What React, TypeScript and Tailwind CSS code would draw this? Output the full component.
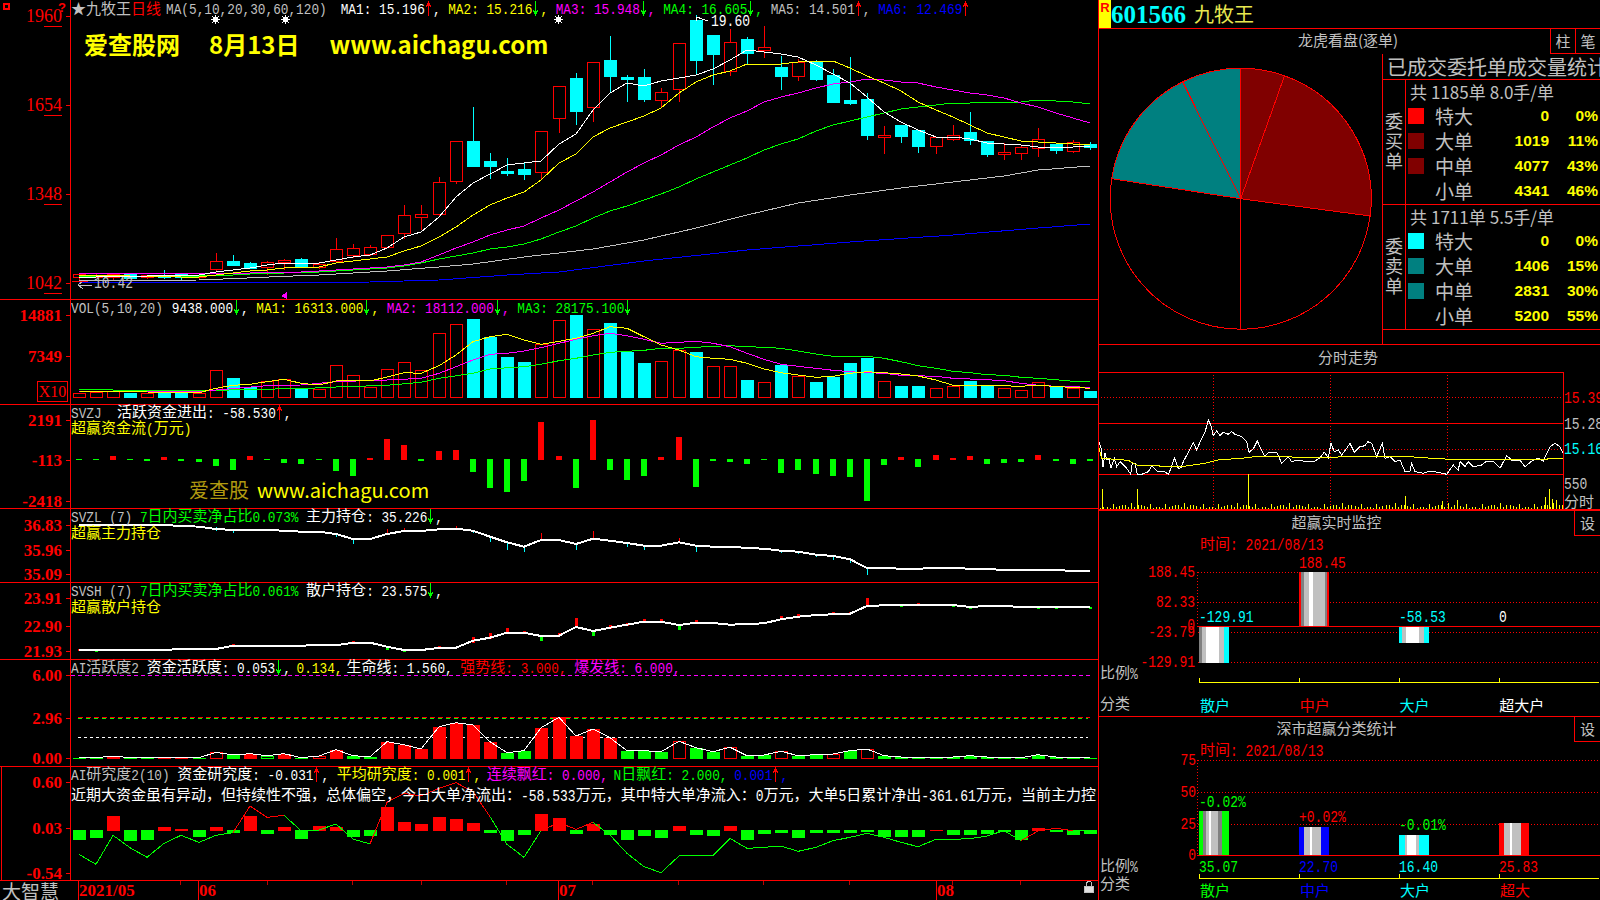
import type { ReactNode } from 'react';

const RED = '#ff0000';
const CYAN = '#00ffff';
const GREEN = '#00ff00';
const X = (i: number) => Math.round(78.6 + 17.14 * i);
const rx = (z: number) => 1095 + z / 3;

const cjkFont = "font-['Noto_Sans_CJK_SC',sans-serif]";
const monoFont = "font-['Liberation_Mono',monospace]";
const serifFont = "font-['Liberation_Serif',serif]";

// [high, body top, body bottom, low, up]
const candles: number[][] = [
  [273, 274, 277, 281, 1], [274, 275, 277, 278, 1], [273, 274, 277, 280, 1], [274, 274, 278, 279, 0],
  [275, 275, 277, 279, 1], [270, 275, 277, 279, 0], [274, 274, 277, 280, 0], [275, 275, 277, 280, 1],
  [253, 261, 269, 272, 1], [255, 261, 265, 265, 0], [262, 263, 268, 269, 0], [261, 262, 267, 275, 1],
  [259, 260, 262, 270, 1], [258, 259, 267, 268, 0], [263, 264, 267, 269, 1], [238, 249, 261, 263, 1],
  [244, 248, 255, 258, 1], [245, 247, 254, 256, 1], [235, 235, 247, 248, 1], [205, 215, 233, 239, 1],
  [205, 214, 217, 230, 1], [177, 182, 214, 217, 1], [141, 141, 181, 184, 1], [107, 141, 166, 167, 0],
  [153, 161, 166, 179, 0], [158, 171, 173, 176, 0], [163, 169, 174, 180, 0], [131, 131, 172, 180, 1],
  [86, 86, 118, 133, 1], [73, 78, 111, 125, 0], [62, 62, 107, 122, 1], [36, 60, 76, 92, 0],
  [75, 77, 79, 102, 0], [69, 77, 99, 102, 0], [88, 92, 100, 108, 1], [43, 43, 89, 102, 1],
  [15, 20, 60, 74, 0], [35, 35, 54, 85, 0], [29, 42, 71, 76, 1], [37, 39, 53, 64, 0],
  [26, 47, 50, 58, 1], [56, 67, 76, 90, 0], [59, 62, 76, 81, 1], [60, 62, 79, 81, 0],
  [69, 75, 102, 103, 0], [57, 100, 103, 105, 0], [93, 99, 135, 140, 0], [126, 135, 137, 154, 1],
  [125, 125, 136, 143, 0], [130, 130, 146, 153, 0], [137, 137, 146, 154, 1], [125, 135, 139, 141, 1],
  [112, 132, 140, 145, 0], [141, 141, 154, 157, 0], [143, 152, 154, 160, 1], [145, 147, 153, 160, 1],
  [128, 139, 148, 157, 1], [143, 144, 150, 154, 0], [140, 142, 151, 153, 1], [142, 144, 147, 150, 0],
];

const interp = (pts: number[][]) => {
  const out: number[] = [];
  for (let i = 0; i < 60; i++) {
    const k = pts.findIndex((p) => p[0] >= i);
    if (k <= 0) out.push(pts[0][1]);
    else {
      const [a, b] = [pts[k - 1], pts[k]];
      out.push(a[1] + ((b[1] - a[1]) * (i - a[0])) / (b[0] - a[0]));
    }
  }
  return out;
};

const ma1 = [277, 277, 276, 276, 276, 275, 275, 275, 272, 270, 268, 265, 263, 263, 263, 260, 257, 255, 248, 237, 232, 217, 197, 183, 174, 165, 163, 161, 144, 134, 110, 93, 83, 86, 81, 78, 75, 69, 60, 50, 52, 54, 57, 65, 74, 83, 97, 112, 122, 130, 137, 137, 139, 143, 144, 145, 147, 148, 147, 146];
const ma2 = [275, 275, 275, 276, 276, 276, 277, 277, 275, 273, 271, 270, 268, 267, 267, 263, 261, 259, 257, 251, 246, 237, 227, 215, 205, 198, 192, 180, 163, 154, 137, 128, 122, 116, 108, 93, 82, 75, 71, 64, 64, 64, 62, 61, 61, 68, 76, 83, 91, 102, 110, 117, 125, 133, 137, 141, 142, 143, 144, 145];
const ma3 = [273, 273, 273, 273, 273, 273, 273, 273, 273, 273, 273, 272, 272, 272, 271, 270, 269, 268, 267, 265, 262, 255, 248, 242, 235, 230, 226, 218, 210, 201, 192, 182, 172, 163, 155, 145, 137, 127, 118, 111, 102, 97, 93, 88, 84, 82, 79, 80, 82, 83, 87, 90, 93, 95, 98, 103, 107, 113, 118, 123];
const ma4 = [276, 276, 276, 276, 276, 276, 276, 276, 275, 275, 274, 273, 273, 272, 272, 271, 270, 269, 268, 266, 263, 259, 256, 253, 249, 247, 244, 239, 232, 226, 218, 211, 206, 200, 194, 187, 179, 172, 165, 158, 150, 144, 139, 131, 125, 121, 117, 113, 109, 107, 105, 103, 103, 102, 102, 102, 100, 101, 102, 104];
const ma5 = interp([[0, 281], [7, 280], [14, 275], [18, 271], [21, 267], [23, 264], [26, 257], [30, 249], [33, 240], [36, 228], [39, 215], [42, 203], [45, 195], [48, 188], [51, 182], [54, 176], [56, 170], [59, 166]]);
const ma6 = interp([[0, 282], [15, 283], [21, 280], [25, 275], [28, 272], [33, 261], [39, 250], [45, 242], [51, 235], [56, 228], [59, 224]]);

const volTops = [295, 290, 287, 293, 293, 293, 293, 293, 226, 249, 276, 257, 253, 280, 283, 211, 241, 275, 223, 202, 226, 115, 88, 72, 126, 186, 201, 148, 75, 60, 103, 84, 171, 204, 199, 166, 171, 214, 214, 255, 262, 210, 244, 261, 246, 204, 189, 258, 273, 273, 280, 274, 258, 273, 280, 286, 262, 276, 280, 288];
const volYellow = interp([[0, 288], [7, 293], [8, 280], [9, 271], [10, 268], [11, 260], [12, 253], [13, 265], [14, 270], [15, 258], [16, 257], [17, 258], [18, 246], [19, 233], [20, 235], [21, 212], [22, 180], [23, 140], [24, 125], [25, 118], [26, 135], [27, 148], [29, 130], [30, 115], [31, 95], [32, 100], [33, 125], [34, 150], [35, 165], [36, 185], [37, 190], [38, 193], [39, 205], [40, 222], [41, 233], [42, 240], [43, 247], [44, 244], [45, 235], [46, 230], [47, 233], [48, 237], [49, 243], [50, 255], [51, 271], [53, 271], [55, 274], [56, 270], [57, 275], [58, 277], [59, 280]]);
const volMagenta = interp([[0, 290], [7, 290], [8, 285], [11, 272], [13, 270], [15, 260], [18, 255], [20, 250], [21, 235], [22, 215], [23, 195], [24, 178], [25, 175], [26, 168], [27, 158], [28, 145], [29, 133], [30, 122], [31, 115], [32, 122], [33, 133], [34, 145], [35, 142], [36, 139], [37, 145], [38, 155], [39, 175], [40, 193], [41, 208], [42, 214], [43, 220], [44, 226], [45, 230], [46, 233], [47, 235], [48, 241], [50, 244], [51, 250], [53, 254], [54, 257], [55, 265], [56, 271], [57, 274], [59, 277]]);
const volGreen = interp([[0, 284], [7, 288], [10, 283], [13, 281], [15, 276], [18, 271], [20, 262], [21, 250], [23, 235], [24, 222], [26, 215], [27, 208], [28, 197], [29, 190], [30, 180], [31, 172], [32, 169], [33, 166], [34, 160], [35, 160], [36, 157], [37, 154], [38, 152], [39, 155], [40, 157], [41, 160], [42, 168], [43, 177], [44, 184], [46, 184], [47, 190], [48, 200], [49, 212], [50, 220], [51, 229], [52, 233], [53, 239], [54, 241], [55, 247], [56, 250], [57, 254], [58, 259], [59, 259]]);

const flows = [-3, -3, 12, -3, -6, 9, -7, -9, -22, -33, 12, -3, -12, -16, -3, -36, -52, 6, 63, 45, -6, 27, 30, -40, -88, -100, -67, 114, 12, -88, 120, -34, -64, -52, 9, 69, -85, -7, -10, -16, -3, -43, -34, -46, -52, -55, -127, -19, 9, -25, 15, 6, 12, -16, -13, -10, 15, -7, -16, -7];

const zlLine = [44, 44, 44, 45, 45, 46, 47, 50, 57, 60, 60, 60, 62, 65, 65, 72, 87, 87, 72, 63, 63, 58, 56, 62, 80, 97, 110, 90, 90, 102, 86, 92, 99, 107, 107, 97, 107, 110, 110, 114, 116, 122, 125, 134, 138, 148, 174, 174, 176, 176, 174, 174, 176, 177, 180, 180, 179, 180, 183, 183];
const zlTicks: [number, number, number, string][] = [[8, 50, 62, CYAN], [9, 60, 70, CYAN], [15, 72, 82, CYAN], [16, 87, 102, CYAN], [18, 57, 75, RED], [19, 55, 67, RED], [22, 47, 58, RED], [23, 60, 68, CYAN], [24, 80, 96, CYAN], [25, 97, 120, CYAN], [26, 110, 125, CYAN], [27, 70, 92, RED], [29, 102, 120, CYAN], [30, 63, 88, RED], [32, 99, 110, CYAN], [33, 107, 120, CYAN], [35, 84, 98, RED], [36, 107, 125, CYAN], [39, 114, 118, CYAN], [41, 122, 128, CYAN], [42, 125, 132, CYAN], [43, 134, 140, CYAN], [44, 138, 150, CYAN], [45, 148, 160, CYAN], [46, 174, 194, CYAN]];

const shLine = [420, 420, 420, 420, 420, 419, 418, 416, 417, 407, 408, 408, 408, 407, 405, 406, 398, 398, 410, 420, 420, 414, 413, 392, 383, 368, 368, 378, 377, 351, 363, 353, 344, 335, 335, 345, 338, 339, 344, 342, 340, 328, 320, 315, 313, 311, 288, 286, 285, 285, 285, 285, 291, 288, 288, 291, 291, 291, 291, 291];
const shTicks: [number, number, number, string][] = [[0, 418, 422, RED], [1, 420, 425, GREEN], [2, 418, 422, RED], [3, 416, 422, RED], [5, 416, 422, RED], [7, 413, 419, RED], [9, 402, 411, RED], [10, 406, 411, RED], [16, 394, 402, RED], [18, 408, 420, GREEN], [19, 418, 425, GREEN], [21, 408, 416, RED], [23, 381, 400, RED], [24, 370, 388, RED], [25, 354, 372, RED], [26, 364, 370, RED], [27, 378, 393, GREEN], [28, 370, 378, RED], [29, 324, 350, RED], [30, 364, 378, GREEN], [31, 345, 358, RED], [32, 340, 348, RED], [33, 327, 340, RED], [34, 328, 336, RED], [35, 346, 360, GREEN], [36, 330, 340, RED], [41, 318, 331, RED], [42, 312, 324, RED], [43, 312, 318, RED], [44, 306, 316, RED], [45, 306, 312, RED], [46, 264, 290, RED], [47, 282, 288, RED], [48, 286, 291, GREEN], [49, 280, 285, RED], [51, 285, 291, GREEN], [52, 291, 297, GREEN], [53, 286, 291, RED], [54, 286, 291, RED], [56, 291, 297, GREEN], [57, 291, 297, GREEN], [59, 291, 297, GREEN]];

const hotTops = [743, 743, 738, 743, 743, 741, 744, 743, 727, 735, 731, 737, 731, 743, 738, 719, 737, 740, 695, 704, 717, 650, 638, 645, 695, 728, 722, 653, 622, 678, 657, 683, 722, 722, 725, 694, 713, 725, 712, 737, 735, 724, 737, 734, 732, 722, 717, 737, 741, 741, 741, 741, 737, 741, 741, 743, 734, 741, 743, 743];
const hotKinds = 'ggrggrrghg' + 'rkrghrggrr' + 'rrrrrggrrr' + 'rrggghgghg' + 'ghgghghggg' + 'gggggggggg';

const aiBars = [240, 234, 168, 243, 240, 201, 207, 231, 201, 219, 168, 222, 201, 237, 198, 201, 231, 228, 141, 186, 192, 171, 177, 189, 219, 243, 225, 162, 174, 222, 192, 225, 240, 228, 234, 198, 225, 228, 198, 240, 222, 219, 234, 219, 219, 219, 216, 231, 231, 231, 211, 225, 225, 222, 216, 240, 204, 216, 225, 222];
const aiLine = [283, 313, 226, 263, 292, 250, 226, 247, 226, 218, 138, 172, 166, 212, 210, 192, 237, 252, 127, 100, 108, 85, 68, 95, 170, 253, 292, 212, 188, 208, 187, 225, 280, 320, 338, 288, 286, 286, 235, 265, 262, 258, 274, 262, 242, 232, 220, 232, 247, 260, 238, 238, 236, 228, 212, 242, 213, 205, 212, 212];

const minuteWhite = [12, 292, 18, 310, 24, 365, 30, 325, 36, 345, 42, 342, 48, 370, 58, 340, 65, 365, 75, 350, 85, 360, 95, 370, 107, 388, 112, 355, 120, 355, 127, 388, 140, 388, 160, 380, 170, 362, 185, 378, 200, 380, 207, 378, 220, 388, 228, 370, 238, 338, 250, 370, 258, 368, 265, 350, 280, 322, 295, 292, 305, 315, 320, 280, 330, 262, 340, 225, 347, 240, 355, 272, 365, 258, 375, 272, 385, 262, 400, 268, 410, 260, 420, 268, 440, 275, 455, 290, 462, 322, 475, 312, 487, 288, 497, 310, 510, 335, 520, 322, 545, 322, 560, 355, 580, 335, 590, 350, 610, 345, 635, 350, 660, 348, 675, 338, 688, 322, 700, 338, 708, 295, 718, 320, 730, 315, 740, 330, 755, 310, 765, 295, 778, 322, 795, 305, 810, 302, 818, 290, 830, 295, 845, 335, 862, 295, 870, 340, 885, 335, 900, 350, 915, 345, 930, 380, 945, 378, 950, 355, 960, 380, 985, 385, 1005, 378, 1030, 382, 1055, 388, 1075, 360, 1090, 375, 1095, 350, 1110, 365, 1120, 350, 1135, 365, 1160, 360, 1175, 348, 1195, 348, 1215, 370, 1235, 332, 1250, 345, 1275, 345, 1290, 365, 1310, 348, 1330, 340, 1345, 348, 1365, 305, 1380, 295, 1395, 305, 1405, 325];
const minuteYellow = [12, 310, 20, 340, 100, 346, 125, 360, 190, 360, 195, 365, 260, 365, 330, 355, 370, 345, 460, 338, 480, 334, 700, 338, 760, 334, 930, 334, 1010, 340, 1090, 344, 1350, 344, 1365, 340, 1405, 340];
const minuteSpikes: number[][] = [[22, 60], [127, 60], [460, 105], [930, 40], [1042, 25], [1085, 28], [1350, 35], [1362, 60], [1372, 30], [1382, 28]];

const poly = (ys: number[], fy: (v: number) => number = (v) => v) => ys.map((v, i) => `${X(i)},${fy(v).toFixed(1)}`).join(' ');
const zPoly = (arr: number[], oy: number) => {
  const out: string[] = [];
  for (let k = 0; k < arr.length; k += 2) out.push(`${rx(arr[k]).toFixed(1)},${(oy + arr[k + 1] / 3).toFixed(1)}`);
  return out.join(' ');
};

// CJK runs are 15px wide, latin runs half of that, stretched to the tall look of the bitmap font
const Mix = ({ t, c = '', wide }: { t: string; c?: string; wide?: boolean }) => (
  <span className={`whitespace-pre ${c}`}>
    {t.split(/([\u2605\u2e80-\u9fff\uff00-\uffef]+)/).map((run, i) =>
      i % 2 ? (
        <span key={i} className={`inline-block text-[15px] leading-[14px] ${cjkFont}`}>{run}</span>
      ) : run ? (
        <span key={i} className={`inline-block scale-y-[1.2] leading-[14px] ${monoFont} ${wide ? 'text-[13px]' : 'text-[12.75px]'}`}>{run}</span>
      ) : null,
    )}
  </span>
);

const Arrow = ({ up }: { up?: boolean }) => (
  <svg width="8" height="15" viewBox="0 0 8 15" shapeRendering="crispEdges" className="inline-block align-middle">
    {up ? (
      <path d="M3.5 0V15M2.5 2V5M4.5 2V5M1.5 4V6M5.5 4V6" stroke={RED} fill="none" />
    ) : (
      <path d="M3.5 0V15M2.5 10V13M4.5 10V13M1.5 9V11M5.5 9V11" stroke={GREEN} fill="none" />
    )}
  </svg>
);
const Up = () => <Arrow up />;
const Dn = () => <Arrow />;

const Legend = ({ children }: { children: ReactNode }) => (
  <div className="flex h-[14px] items-center whitespace-nowrap leading-[14px]">{children}</div>
);

const Axis = ({ top, labels, big, boxed, children }: { top: number; labels: [string, number][]; big?: boolean; boxed?: boolean; children?: ReactNode }) => (
  <div className={`relative shrink-0 border-r border-[#ff0000] ${boxed ? 'ml-[1px] w-[70px] border-l' : 'w-[71px]'}`}>
    {labels.map(([t, y]) => (
      <span key={t}>
        <span style={{ top: y - top }} className={`absolute right-[8px] -translate-y-1/2 whitespace-nowrap leading-none text-[#ff0000] ${serifFont} ${big ? 'text-[18px]' : 'text-[17px] font-bold'}`}>
          {big ? (
            <>
              {t.slice(0, 2)}
              <span className="border-b border-[#ff0000]">{t.slice(2)}</span>
            </>
          ) : (
            t
          )}
        </span>
        <span style={{ top: y - top }} className="absolute right-0 h-px w-[4px] bg-[#ff0000]" />
      </span>
    ))}
    {children}
  </div>
);

const Lab = ({ x, y, oy, t, c, right }: { x: number; y: number; oy: number; t: string; c: string; right?: boolean }) => (
  <div style={{ left: x - 1099, top: y - oy }} className={`absolute flex leading-[14px] ${right ? '-translate-x-full -translate-y-1/2' : '-translate-y-1/2'}`}>
    <Mix wide t={t} c={c} />
  </div>
);

const Stripes = ({ segs, y0, y1 }: { segs: [number, number, string][]; y0: number; y1: number }) => (
  <>
    {segs.map(([a, b, col]) => (
      <rect key={a} x={Math.round(rx(a))} y={y0} width={Math.round(rx(b)) - Math.round(rx(a))} height={y1 - y0} fill={col} />
    ))}
  </>
);

const Star = ({ x, y }: { x: number; y: number }) => (
  <g stroke="#fff" strokeWidth="1">
    <rect x={x - 2} y={y - 2} width="5" height="5" fill="#fff" stroke="none" />
    <path d={`M${x - 3} ${y - 3}L${x + 4} ${y + 4}M${x + 4} ${y - 3}L${x - 3} ${y + 4}M${x + 0.5} ${y - 4}V${y + 5}M${x - 4} ${y + 0.5}H${x + 5}`} />
  </g>
);

const PriceChart = () => (
  <svg width="1027" height="299" viewBox="71 0 1027 299" shapeRendering="crispEdges" className="block">
    {candles.map(([hi, top, bot, lo, up], i) => {
      const cx = X(i);
      const col = up ? RED : CYAN;
      return (
        <g key={i}>
          <path d={`M${cx + 0.5} ${hi}V${top}M${cx + 0.5} ${bot}V${lo}`} stroke={col} />
          {up ? (
            <rect x={cx - 5.5} y={top + 0.5} width="12" height={bot - top} fill="#000" stroke={RED} />
          ) : (
            <rect x={cx - 6} y={top} width="13" height={bot - top + 1} fill={CYAN} />
          )}
        </g>
      );
    })}
    <polyline points={poly(ma6)} fill="none" stroke="#0000ff" />
    <polyline points={poly(ma5)} fill="none" stroke="#c0c0c0" />
    <polyline points={poly(ma4)} fill="none" stroke={GREEN} />
    <polyline points={poly(ma3)} fill="none" stroke="#ff00ff" />
    <polyline points={poly(ma2)} fill="none" stroke="#ffff00" />
    <polyline points={poly(ma1)} fill="none" stroke="#ffffff" />
    <Star x={215} y={19} />
    <Star x={285} y={19} />
    <Star x={558} y={19} />
    <path d="M696 17L708 21M696 17l4 0M696 17l1 4" stroke="#fff" fill="none" />
    <path d="M78 285l5-4M78 285l5 4M78 285h14" stroke="#c0c0c0" fill="none" />
    <path d="M72 281h16" stroke={RED} />
    <path d="M281 296l6-4v7z" fill="#ff00ff" />
  </svg>
);

const VolChart = () => (
  <svg width="1027" height="104" viewBox="71 300 1027 104" shapeRendering="crispEdges" className="block">
    {volTops.map((z, i) => {
      const y = Math.round(295 + z / 3);
      const up = candles[i][4] || i === 37;
      return up ? (
        <rect key={i} x={X(i) - 5.5} y={y + 0.5} width="12" height={397 - y} fill="#000" stroke={RED} />
      ) : (
        <rect key={i} x={X(i) - 6} y={y} width="13" height={398 - y} fill={CYAN} />
      );
    })}
    <polyline points={poly(volGreen, (v) => 295 + v / 3)} fill="none" stroke={GREEN} />
    <polyline points={poly(volMagenta, (v) => 295 + v / 3)} fill="none" stroke="#ff00ff" />
    <polyline points={poly(volYellow, (v) => 295 + v / 3)} fill="none" stroke="#ffff00" />
  </svg>
);

const FlowChart = () => (
  <svg width="1027" height="103" viewBox="71 405 1027 103" shapeRendering="crispEdges" className="block">
    {flows.map((v, i) =>
      v > 0 ? (
        <rect key={i} x={X(i) - 3} y={460 - v / 3} width="6" height={v / 3} fill={RED} />
      ) : (
        <rect key={i} x={X(i) - 3} y={459} width="6" height={Math.max(1, -v / 3)} fill={GREEN} />
      ),
    )}
  </svg>
);

const HoldChart = ({ top, h, line, ticks, wide }: { top: number; h: number; line: number[]; ticks: [number, number, number, string][]; wide?: boolean }) => (
  <svg width="1027" height={h} viewBox={`71 ${top} 1027 ${h}`} shapeRendering="crispEdges" className="block">
    {ticks.map(([i, a, b, col]) =>
      wide ? (
        <rect key={i} x={X(i) - 1} y={510 + a / 3} width="3" height={(b - a) / 3} fill={col} />
      ) : (
        <rect key={i} x={X(i)} y={510 + a / 3} width="1" height={(b - a) / 3} fill={col} />
      ),
    )}
    <polyline points={poly(line, (v) => 510 + v / 3)} fill="none" stroke="#fff" strokeWidth="2" />
  </svg>
);

const HotChart = () => (
  <svg width="1027" height="106" viewBox="71 660 1027 106" shapeRendering="crispEdges" className="block">
    <path d="M71 675.5H1090" stroke="#ff00ff" strokeDasharray="4 3" />
    <path d="M78 717.5H1090" stroke={RED} strokeDasharray="5 3" />
    <path d="M78 718.5H1088" stroke={GREEN} strokeDasharray="4 4" />
    <path d="M78 737.5H1088" stroke="#fff" strokeDasharray="3 3" />
    {hotTops.map((z, i) => {
      const y = Math.round(510 + z / 3);
      const k = hotKinds[i];
      const hollow = k === 'h' || k === 'k';
      const col = k === 'r' || k === 'h' ? RED : GREEN;
      return hollow ? (
        <rect key={i} x={X(i) - 5.5} y={y + 0.5} width="12" height={758 - y} fill="#000" stroke={col} />
      ) : (
        <rect key={i} x={X(i) - 6} y={y} width="13" height={759 - y} fill={col} />
      );
    })}
    <polyline points={poly(hotTops, (v) => 510 + v / 3)} fill="none" stroke="#fff" />
  </svg>
);

const isRedSeg = (i: number) => (i >= 9 && i <= 11) || (i >= 17 && i <= 23) || (i >= 27 && i <= 29) || (i >= 55 && i <= 57);

const ResearchChart = () => (
  <svg width="1027" height="113" viewBox="71 767 1027 113" shapeRendering="crispEdges" className="block">
    {aiBars.map((z, i) => {
      const y = Math.round(760 + z / 3);
      return z < 213 ? (
        <rect key={i} x={X(i) - 6} y={y} width="13" height={831 - y} fill={RED} />
      ) : (
        <rect key={i} x={X(i) - 6} y={830} width="13" height={y - 830} fill={GREEN} />
      );
    })}
    {aiLine.slice(0, 59).map((z, i) => (
      <line key={i} x1={X(i)} y1={760 + z / 3} x2={X(i + 1)} y2={760 + aiLine[i + 1] / 3} stroke={isRedSeg(i) ? RED : GREEN} />
    ))}
  </svg>
);

const DateAxis = () => {
  const major: [number, string][] = [[78, '2021/05'], [198, '06'], [558, '07'], [936, '08']];
  const minor = [180, 267, 352, 421, 506, 592, 678, 763, 849, 952, 1020];
  return (
    <div className="relative h-[19px] flex-1">
      <svg width="1027" height="19" viewBox="71 881 1027 19" shapeRendering="crispEdges" className="block">
        {major.map(([x]) => (
          <path key={x} d={`M${x + 0.5} 881V900`} stroke={RED} />
        ))}
        {minor.map((x) => (
          <path key={x} d={`M${x + 0.5} 881V885`} stroke="#c00000" />
        ))}
        <g fill="none" stroke="#c0c0c0">
          <path d="M1086.5 886V884a2.5 2.5 0 0 1 5 0V886" />
          <rect x="1084.5" y="886.5" width="9" height="6" fill="#e0e0e0" />
        </g>
      </svg>
      {major.map(([x, t]) => (
        <span key={t} style={{ left: x - 70 }} className={`absolute top-0 text-[17px] font-bold leading-[19px] text-[#ff0000] ${serifFont}`}>
          {t}
        </span>
      ))}
    </div>
  );
};

const pieSector = (a0: number, a1: number) => {
  const [cx, cy, r] = [1240.7, 198.7, 130.5];
  const pt = (a: number) => {
    const t = (a * Math.PI) / 180;
    return `${(cx + r * Math.sin(t)).toFixed(1)} ${(cy - r * Math.cos(t)).toFixed(1)}`;
  };
  return `M${cx} ${cy}L${pt(a0)}A${r} ${r} 0 ${a1 - a0 > 180 ? 1 : 0} 1 ${pt(a1)}Z`;
};

const sectors: [number, number, string][] = [
  [0, 19.6, '#800000'],
  [19.6, 97.6, '#800000'],
  [97.6, 180, '#000000'],
  [180, 278.8, '#000000'],
  [278.8, 333.6, '#008080'],
  [333.6, 360, '#008080'],
];

const buyRows = [
  ['特大', '0', '0%', 'bg-[#ff0000]'],
  ['大单', '1019', '11%', 'bg-[#800000]'],
  ['中单', '4077', '43%', 'bg-[#800000]'],
  ['小单', '4341', '46%', ''],
];
const sellRows = [
  ['特大', '0', '0%', 'bg-[#00ffff]'],
  ['大单', '1406', '15%', 'bg-[#008080]'],
  ['中单', '2831', '30%', 'bg-[#008080]'],
  ['小单', '5200', '55%', ''],
];

const OrderGroup = ({ side, head, rows }: { side: string; head: string; rows: string[][] }) => (
  <div className="flex h-[125px] border-b border-[#ff0000]">
    <div className={`flex w-[23px] shrink-0 items-center justify-center border-r border-[#ff0000] pb-[4px] text-center text-[18px] leading-[20px] text-[#c0c0c0] ${cjkFont}`}>
      {side}
    </div>
    <div className="flex-1">
      <div className="flex h-[25px] items-center pb-[3px] pl-[4px] text-[#c0c0c0]">
        {head.split(' ').map((part, i) => (
          <span key={i} className={`mr-[4px] text-[17px] leading-none ${cjkFont}`}>{part}</span>
        ))}
      </div>
      {rows.map(([name, val, pct, swatch]) => (
        <div key={name} className="flex h-[25px] items-center pb-[4px]">
          <span className={`ml-[2px] h-[16px] w-[16px] ${swatch}`} />
          <span className={`ml-[11px] w-[40px] text-[19px] leading-none text-[#c0c0c0] ${cjkFont}`}>{name}</span>
          <span className="w-[74px] text-right font-['Liberation_Sans',sans-serif] text-[15.5px] font-bold leading-none text-[#ffff00]">{val}</span>
          <span className="w-[49px] text-right font-['Liberation_Sans',sans-serif] text-[15.5px] font-bold leading-none text-[#ffff00]">{pct}</span>
        </div>
      ))}
    </div>
  </div>
);

const PieSection = () => (
  <section className="flex h-[316px] flex-col border-b border-[#ff0000]">
    <div className="flex h-[25px] shrink-0">
      <div className={`flex flex-1 items-center justify-center pb-[2px] pl-[47px] text-[15px] text-[#c0c0c0] ${cjkFont}`}>龙虎看盘(逐单)</div>
      <div className={`flex w-[25px] items-center justify-center border-b border-l border-[#ff0000] text-[15px] text-[#c0c0c0] ${cjkFont}`}>柱</div>
      <div className={`flex w-[25px] items-center justify-center border-b border-l border-[#ff0000] text-[15px] text-[#c0c0c0] ${cjkFont}`}>笔</div>
    </div>
    <div className="flex flex-1 overflow-hidden">
      <svg width="283" height="290" viewBox="1099 54 283 290" shapeRendering="crispEdges" className="block shrink-0">
        {sectors.map(([a, b, col]) => (
          <path key={a} d={pieSector(a, b)} fill={col} stroke={RED} />
        ))}
      </svg>
      <div className="flex-1 overflow-hidden border-l border-[#ff0000]">
        <div className={`h-[26px] overflow-hidden whitespace-nowrap border-b border-[#ff0000] pl-[4px] text-[20px] leading-[25px] text-[#c0c0c0] ${cjkFont}`}>已成交委托单成交量统计</div>
        <OrderGroup side="委买单" head="共 1185单 8.0手/单" rows={buyRows} />
        <OrderGroup side="委卖单" head="共 1711单 5.5手/单" rows={sellRows} />
      </div>
    </div>
  </section>
);

const MinuteSection = () => (
  <section className="relative h-[166px] overflow-hidden border-b-2 border-[#ff0000]">
    <svg width="501" height="166" viewBox="1099 345 501 166" shapeRendering="crispEdges" className="absolute inset-0">
      <g stroke={RED} fill="none">
        <path d="M1098 372.5H1563.5V509M1098 423.5H1563M1098 474.5H1563" />
        <path d="M1098 397.5H1563M1098 449.5H1563M1213.5 372V509M1330.5 372V509M1447.5 372V509" strokeDasharray="1 2" />
      </g>
      {Array.from({ length: 150 }, (_, i) => {
        const z = 16 + i * 9.3;
        const h = 3 + ((i * i * 7 + i * 13) % 17);
        return <path key={i} d={`M${Math.round(rx(z)) + 0.5} 509V${509 - h / 3}`} stroke="#ffff00" />;
      })}
      {minuteSpikes.map(([z, h]) => (
        <path key={z} d={`M${Math.round(rx(z)) + 0.5} 509V${509 - h / 3}`} stroke="#ffff00" />
      ))}
      <polyline points={zPoly(minuteWhite, 345)} fill="none" stroke="#fff" />
      <polyline points={zPoly(minuteYellow, 345)} fill="none" stroke="#ffff00" />
    </svg>
    <div className={`relative flex h-[25px] w-[498px] items-center justify-center text-[15px] text-[#c0c0c0] ${cjkFont}`}>分时走势</div>
    <Lab x={1564} y={398} oy={345} t="15.39" c="text-[#ff0000]" />
    <Lab x={1564} y={424} oy={345} t="15.28" c="text-[#c0c0c0]" />
    <Lab x={1564} y={449} oy={345} t="15.16" c="text-[#00ffff]" />
    <Lab x={1564} y={484} oy={345} t="550" c="text-[#c0c0c0]" />
    <Lab x={1564} y={501} oy={345} t="分时" c="text-[#c0c0c0]" />
  </section>
);

const SectionTitle = ({ title }: { title: string }) => (
  <div className="flex h-[25px] shrink-0">
    <div className={`flex flex-1 items-center justify-center pb-[2px] text-[15px] text-[#c0c0c0] ${cjkFont}`}>{title}</div>
    <div className={`flex w-[26px] items-center justify-center border-b border-l border-[#ff0000] text-[15px] text-[#c0c0c0] ${cjkFont}`}>设</div>
  </div>
);

const MonitorSection = () => (
  <section className="relative h-[206px] overflow-hidden border-b border-[#ff0000]">
    <svg width="501" height="205" viewBox="1099 511 501 205" shapeRendering="crispEdges" className="absolute inset-0">
      <g stroke={RED} fill="none">
        <path d="M1197.5 572V627M1198 572.5H1600M1198 602.5H1600M1198 632.5H1600M1198 662.5H1600" strokeDasharray="1 2" />
      </g>
      <Stripes y0={627} y1={663} segs={[[312, 322, '#808080'], [322, 334, '#c0c0c0'], [334, 372, '#ffffff'], [372, 387, '#c0c0c0'], [387, 402, CYAN]]} />
      <Stripes y0={572} y1={627} segs={[[612, 618, RED], [618, 627, '#808080'], [627, 642, '#c0c0c0'], [642, 655, '#ffffff'], [655, 690, '#c0c0c0'], [690, 696, '#808080'], [696, 702, RED]]} />
      <Stripes y0={627} y1={643} segs={[[912, 920, CYAN], [920, 934, '#c0c0c0'], [934, 972, '#ffffff'], [972, 987, '#c0c0c0'], [987, 1002, CYAN]]} />
      <path d="M1197 626.5H1600" stroke={RED} />
      <path d="M1199.5 678V682.5H1599M1299.5 678V682M1399.5 678V682M1499.5 678V682" stroke="#ffff00" fill="none" />
    </svg>
    <div className="relative flex h-full flex-col">
      <SectionTitle title="超赢实时监控" />
      <div className="flex h-[14px] items-center pl-[101px]"><Mix wide t="时间: 2021/08/13" c="text-[#ff0000]" /></div>
      <div className="mt-auto flex h-[52px] pb-[5px]">
        <div className="flex w-[100px] flex-col justify-between pl-[1px]">
          <div className="flex h-[16px] items-center"><Mix wide t="比例%" c="text-[#c0c0c0]" /></div>
          <div className="flex h-[16px] items-center"><Mix wide t="分类" c="text-[#c0c0c0]" /></div>
        </div>
        <div className="mb-[2px] mt-auto grid h-[16px] w-[400px] grid-cols-4 items-center pl-[1px]">
          <div><Mix wide t="散户" c="text-[#00ffff]" /></div>
          <div><Mix wide t="中户" c="text-[#ff0000]" /></div>
          <div><Mix wide t="大户" c="text-[#00ffff]" /></div>
          <div><Mix wide t="超大户" c="text-white" /></div>
        </div>
      </div>
    </div>
    <Lab x={1195} y={572} oy={511} right t="188.45" c="text-[#ff0000]" />
    <Lab x={1195} y={602} oy={511} right t="82.33" c="text-[#ff0000]" />
    <Lab x={1195} y={625} oy={511} right t="0" c="text-[#ff0000]" />
    <Lab x={1195} y={632} oy={511} right t="-23.79" c="text-[#ff0000]" />
    <Lab x={1195} y={662} oy={511} right t="-129.91" c="text-[#ff0000]" />
    <Lab x={1299} y={563} oy={511} t="188.45" c="text-[#ff0000]" />
    <Lab x={1199} y={617} oy={511} t="-129.91" c="text-[#00ffff]" />
    <Lab x={1399} y={617} oy={511} t="-58.53" c="text-[#00ffff]" />
    <Lab x={1499} y={617} oy={511} t="0" c="text-white" />
  </section>
);

const ClassSection = () => (
  <section className="relative h-[183px] overflow-hidden">
    <svg width="501" height="183" viewBox="1099 717 501 183" shapeRendering="crispEdges" className="absolute inset-0">
      <path d="M1197.5 760V855M1198 760.5H1600M1198 792.5H1600M1198 824.5H1600" stroke={RED} strokeDasharray="1 2" fill="none" />
      <Stripes y0={811} y1={855} segs={[[312, 324, GREEN], [324, 332, '#808080'], [332, 343, '#c0c0c0'], [343, 348, '#ffffff'], [348, 368, '#c0c0c0'], [368, 381, '#808080'], [381, 402, GREEN]]} />
      <Stripes y0={827} y1={855} segs={[[612, 627, '#0000ff'], [627, 645, '#c0c0c0'], [645, 651, '#ffffff'], [651, 678, '#c0c0c0'], [678, 702, '#0000ff']]} />
      <Stripes y0={835} y1={855} segs={[[912, 930, CYAN], [930, 936, '#c0c0c0'], [936, 963, '#ffffff'], [963, 972, '#c0c0c0'], [972, 1002, CYAN]]} />
      <Stripes y0={823} y1={855} segs={[[1212, 1228, RED], [1228, 1245, '#c0c0c0'], [1245, 1250, '#ffffff'], [1250, 1278, '#c0c0c0'], [1278, 1302, RED]]} />
      <path d="M1197 855.5H1600" stroke={RED} />
      <path d="M1199.5 874V878.5H1599M1299.5 874V878M1399.5 874V878M1499.5 874V878" stroke="#ffff00" fill="none" />
    </svg>
    <div className="relative flex h-full flex-col">
      <SectionTitle title="深市超赢分类统计" />
      <div className="flex h-[14px] items-center pl-[101px]"><Mix wide t="时间: 2021/08/13" c="text-[#ff0000]" /></div>
      <div className="mt-auto flex h-[43px]">
        <div className="flex w-[100px] flex-col gap-[2px] pl-[1px]">
          <div className="flex h-[16px] items-center"><Mix wide t="比例%" c="text-[#c0c0c0]" /></div>
          <div className="flex h-[16px] items-center"><Mix wide t="分类" c="text-[#c0c0c0]" /></div>
        </div>
        <div className="grid h-full w-[400px] grid-cols-4 grid-rows-[16px_18px] items-center gap-y-[8px]">
          <div><Mix wide t="35.07" c="text-[#00ff00]" /></div>
          <div><Mix wide t="22.70" c="text-[#0000ff]" /></div>
          <div><Mix wide t="16.40" c="text-[#00ffff]" /></div>
          <div><Mix wide t="25.83" c="text-[#ff0000]" /></div>
          <div className="pl-[1px]"><Mix wide t="散户" c="text-[#00ff00]" /></div>
          <div className="pl-[1px]"><Mix wide t="中户" c="text-[#0000ff]" /></div>
          <div className="pl-[1px]"><Mix wide t="大户" c="text-[#00ffff]" /></div>
          <div className="pl-[1px]"><Mix wide t="超大" c="text-[#ff0000]" /></div>
        </div>
      </div>
    </div>
    <Lab x={1196} y={760} oy={717} right t="75" c="text-[#ff0000]" />
    <Lab x={1196} y={792} oy={717} right t="50" c="text-[#ff0000]" />
    <Lab x={1196} y={824} oy={717} right t="25" c="text-[#ff0000]" />
    <Lab x={1196} y={855} oy={717} right t="0" c="text-[#ff0000]" />
    <Lab x={1199} y={802} oy={717} t="-0.02%" c="text-[#00ff00]" />
    <Lab x={1299} y={817} oy={717} t="+0.02%" c="text-[#ff0000]" />
    <Lab x={1399} y={825} oy={717} t="-0.01%" c="text-[#00ff00]" />
  </section>
);

export default function App() {
  return (
    <div className="flex h-[900px] w-[1600px] overflow-hidden bg-black">
      <div className="flex w-[1099px] shrink-0 flex-col border-r border-[#ff0000]">
        <div className="flex h-[300px] border-b border-[#ff0000]">
          <Axis top={0} big labels={[['1960', 16], ['1654', 105], ['1348', 194], ['1042', 283]]}>
            <span className="absolute left-[3px] top-[3px] h-[7px] w-[7px] border-2 border-[#ff0000]" />
            <span className="absolute right-[4px] top-0 font-['Liberation_Sans',sans-serif] text-[13px] font-bold leading-[15px] text-[#ff0000]">?</span>
          </Axis>
          <div className="relative flex-1">
            <PriceChart />
            <div className="absolute left-0 top-0 pt-[1px]">
              <Legend>
                <Mix t="★九牧王" c="text-[#c0c0c0]" />
                <Mix t="日线" c="text-[#ff0000]" />
                <Mix t="MA(5,10,20,30,60,120)" c="ml-[5px] text-[#c0c0c0]" />
                <Mix t="MA1: 15.196" c="ml-[14px] text-white" /><Up /><Mix t=", " c="text-white" />
                <Mix t="MA2: 15.216" c="text-[#ffff00]" /><Dn /><Mix t=", " c="text-[#ffff00]" />
                <Mix t="MA3: 15.948" c="text-[#ff00ff]" /><Dn /><Mix t=", " c="text-[#ff00ff]" />
                <Mix t="MA4: 16.605" c="text-[#00ff00]" /><Dn /><Mix t=", " c="text-[#00ff00]" />
                <Mix t="MA5: 14.501" c="text-[#c0c0c0]" /><Up /><Mix t=", " c="text-[#c0c0c0]" />
                <Mix t="MA6: 12.469" c="text-[#0000ff]" /><Up />
              </Legend>
            </div>
            <div className={`absolute left-[13px] top-[28px] flex items-center text-[24px] font-bold leading-[32px] text-[#ffff00] ${cjkFont}`}>
              <span>爱查股网</span>
              <span className="ml-[29px]">8月13日</span>
              <span className="ml-[30px]">www.aichagu.com</span>
            </div>
            <div className="absolute left-[640px] top-[7px] flex"><Mix wide t="19.60" c="text-white" /></div>
            <div className="absolute left-[23px] top-[269px] flex"><Mix wide t="10.42" c="text-[#c0c0c0]" /></div>
          </div>
        </div>

        <div className="flex h-[105px] border-b border-[#ff0000]">
          <Axis top={300} labels={[['14881', 315], ['7349', 356]]}>
            <span className={`absolute left-[37px] top-[81px] flex h-[21px] w-[31px] items-center justify-center border border-[#ff0000] text-[16px] leading-none text-[#ff0000] ${serifFont}`}>X10</span>
          </Axis>
          <div className="relative flex-1">
            <VolChart />
            <div className="absolute left-0 top-0">
              <Legend>
                <Mix t="VOL(5,10,20)" c="text-[#c0c0c0]" />
                <Mix t="9438.000" c="ml-[9px] text-white" /><Dn /><Mix t=", " c="text-white" />
                <Mix t="MA1: 16313.000" c="text-[#ffff00]" /><Dn /><Mix t=", " c="text-[#ffff00]" />
                <Mix t="MA2: 18112.000" c="text-[#ff00ff]" /><Dn /><Mix t=", " c="text-[#ff00ff]" />
                <Mix t="MA3: 28175.100" c="text-[#00ff00]" /><Dn />
              </Legend>
            </div>
          </div>
        </div>

        <div className="flex h-[104px] border-b border-[#ff0000]">
          <Axis top={405} labels={[['2191', 420], ['-113', 460], ['-2418', 501]]} />
          <div className="relative flex-1">
            <FlowChart />
            <div className="absolute left-0 top-0 flex flex-col gap-[2px]">
              <Legend>
                <Mix t="SVZJ  " c="text-[#c0c0c0]" />
                <Mix t="活跃资金进出: -58.530" c="text-white" /><Up /><Mix t="," c="text-white" />
              </Legend>
              <Legend><Mix t="超赢资金流(万元)" c="text-[#ffff00]" /></Legend>
            </div>
            <div className="absolute left-[118px] top-[72px] flex items-center whitespace-nowrap text-[20px] leading-[26px]">
              <span className={`mr-[8px] text-[#b09a10] ${cjkFont}`}>爱查股</span>
              <span className={`text-[#ffff00] ${cjkFont}`}>www.aichagu.com</span>
            </div>
          </div>
        </div>

        <div className="flex h-[74px] border-b border-[#ff0000]">
          <Axis top={509} labels={[['36.83', 525], ['35.96', 550], ['35.09', 574]]} />
          <div className="relative flex-1">
            <HoldChart top={509} h={73} line={zlLine} ticks={zlTicks} />
            <div className="absolute left-0 top-0 flex flex-col gap-[2px]">
              <Legend>
                <Mix t="SVZL (7) " c="text-[#c0c0c0]" />
                <Mix t="7日内买卖净占比0.073% " c="text-[#00ff00]" />
                <Mix t="主力持仓: 35.226" c="text-white" /><Dn /><Mix t="," c="text-white" />
              </Legend>
              <Legend><Mix t="超赢主力持仓" c="text-[#ffff00]" /></Legend>
            </div>
          </div>
        </div>

        <div className="flex h-[77px] border-b border-[#ff0000]">
          <Axis top={583} labels={[['23.91', 598], ['22.90', 626], ['21.93', 651]]} />
          <div className="relative flex-1">
            <HoldChart top={583} h={76} line={shLine} ticks={shTicks} wide />
            <div className="absolute left-0 top-0 flex flex-col gap-[2px]">
              <Legend>
                <Mix t="SVSH (7) " c="text-[#c0c0c0]" />
                <Mix t="7日内买卖净占比0.061% " c="text-[#00ff00]" />
                <Mix t="散户持仓: 23.575" c="text-white" /><Dn /><Mix t="," c="text-white" />
              </Legend>
              <Legend><Mix t="超赢散户持仓" c="text-[#ffff00]" /></Legend>
            </div>
          </div>
        </div>

        <div className="flex h-[107px] border-b border-[#ff0000]">
          <Axis top={660} labels={[['6.00', 675], ['2.96', 718], ['0.00', 758]]} />
          <div className="relative flex-1">
            <HotChart />
            <div className="absolute left-0 top-0">
              <Legend>
                <Mix t="AI活跃度2 " c="text-[#c0c0c0]" />
                <Mix t="资金活跃度: 0.053" c="text-white" /><Dn /><Mix t=", " c="text-white" />
                <Mix t="0.134," c="ml-[-2px] text-[#ffff00]" />
                <Mix t="生命线: 1.560, " c="ml-[4px] text-white" />
                <Mix t="强势线: 3.000, " c="text-[#ff0000]" />
                <Mix t="爆发线: 6.000," c="text-[#ff00ff]" />
              </Legend>
            </div>
          </div>
        </div>

        <div className="flex h-[114px] border-b border-[#ff0000]">
          <Axis top={767} boxed labels={[['0.60', 782], ['0.03', 828], ['-0.54', 873]]} />
          <div className="relative flex-1">
            <ResearchChart />
            <div className="absolute left-0 top-0 flex flex-col gap-[7px]">
              <Legend>
                <Mix t="AI研究度2(10) " c="text-[#c0c0c0]" />
                <Mix t="资金研究度: -0.031" c="text-white" /><Up /><Mix t=", " c="text-white" />
                <Mix t="平均研究度: 0.001" c="text-[#ffff00]" /><Up /><Mix t=", " c="text-[#ffff00]" />
                <Mix t="连续飘红: 0.000, " c="ml-[-2px] text-[#ff00ff]" />
                <Mix t="N日飘红: 2.000, " c="ml-[-2px] text-[#00ff00]" />
                <Mix t="0.001" c="ml-[-1px] text-[#0000ff]" /><Up /><Mix t="," c="text-[#0000ff]" />
              </Legend>
              <Legend>
                <Mix wide t="近期大资金虽有异动，但持续性不强，总体偏空，今日大单净流出：-58.533万元，其中特大单净流入：0万元，大单5日累计净出-361.61万元，当前主力控" c="text-white" />
              </Legend>
            </div>
          </div>
        </div>

        <div className="flex h-[19px]">
          <div className={`w-[71px] shrink-0 pl-[2px] text-[19px] leading-[19px] text-[#c0c0c0] ${cjkFont}`}>大智慧</div>
          <DateAxis />
        </div>
      </div>

      <div className="flex min-w-0 flex-1 flex-col">
        <header className="flex h-[29px] shrink-0 border-b border-[#ff0000]">
          <span className="h-[28px] w-[12px] bg-[#ffff00] text-center font-['Liberation_Sans',sans-serif] text-[13px] font-bold leading-[15px] text-[#ff0000]">R</span>
          <span className="font-['Liberation_Serif',serif] text-[25px] font-bold leading-[30px] text-[#00ffff]">601566</span>
          <span className={`ml-[8px] text-[20px] leading-[28px] text-[#e8e850] ${cjkFont}`}>九牧王</span>
        </header>
        <PieSection />
        <MinuteSection />
        <MonitorSection />
        <ClassSection />
      </div>
    </div>
  );
}
